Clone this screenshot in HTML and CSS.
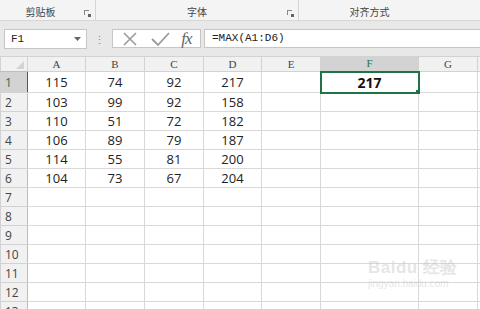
FILE: index.html
```html
<!DOCTYPE html>
<html>
<head>
    <meta name="viewport" content="width=device-width, initial-scale=1">
    <link rel="stylesheet" href="styles.css">
</head>

<body>
    <div class="ribbon">
        <div class="group group-clip">
            <span class="group-label">剪贴板</span>
            <span class="launcher"></span>
        </div>
        <div class="group group-font">
            <span class="group-label">字体</span>
            <span class="launcher"></span>
        </div>
        <div class="group group-align">
            <span class="group-label">对齐方式</span>
        </div>
    </div>

    <div class="formula-bar">
        <div class="name-box">
            <span>F1</span>
            <svg class="caret" width="7" height="4" viewBox="0 0 7 4"><path d="M0 0h7L3.5 4z" fill="#666"/></svg>
        </div>
        <div class="grip">⋮</div>
        <div class="fx-box">
            <svg width="18" height="18" viewBox="0 0 18 18"><path d="M3 3l12 12M15 3L3 15" stroke="#9a9a9a" stroke-width="1.6" fill="none"/></svg>
            <svg width="20" height="18" viewBox="0 0 20 18"><path d="M2 9l6 6L19 3" stroke="#9a9a9a" stroke-width="1.8" fill="none"/></svg>
            <span class="fx">fx</span>
        </div>
        <div class="formula-input">=MAX(A1:D6)</div>
    </div>

    <div class="sheet-wrap">
        <table class="sheet">
            <colgroup>
                <col class="c-row">
                <col class="c-a"><col class="c-b"><col class="c-c"><col class="c-d">
                <col class="c-e"><col class="c-f"><col class="c-g"><col class="c-h">
            </colgroup>
            <thead>
                <tr>
                    <th class="corner"><span class="corner-mark"></span></th>
                    <th>A</th><th>B</th><th>C</th><th>D</th><th>E</th>
                    <th class="active-col">F</th><th>G</th><th></th>
                </tr>
            </thead>
            <tbody>
                <tr><th class="active-row">1</th><td>115</td><td>74</td><td>92</td><td>217</td><td></td><td class="selected">217</td><td></td><td></td></tr>
                <tr><th>2</th><td>103</td><td>99</td><td>92</td><td>158</td><td></td><td></td><td></td><td></td></tr>
                <tr><th>3</th><td>110</td><td>51</td><td>72</td><td>182</td><td></td><td></td><td></td><td></td></tr>
                <tr><th>4</th><td>106</td><td>89</td><td>79</td><td>187</td><td></td><td></td><td></td><td></td></tr>
                <tr><th>5</th><td>114</td><td>55</td><td>81</td><td>200</td><td></td><td></td><td></td><td></td></tr>
                <tr><th>6</th><td>104</td><td>73</td><td>67</td><td>204</td><td></td><td></td><td></td><td></td></tr>
                <tr><th>7</th><td></td><td></td><td></td><td></td><td></td><td></td><td></td><td></td></tr>
                <tr><th>8</th><td></td><td></td><td></td><td></td><td></td><td></td><td></td><td></td></tr>
                <tr><th>9</th><td></td><td></td><td></td><td></td><td></td><td></td><td></td><td></td></tr>
                <tr><th>10</th><td></td><td></td><td></td><td></td><td></td><td></td><td></td><td></td></tr>
                <tr><th>11</th><td></td><td></td><td></td><td></td><td></td><td></td><td></td><td></td></tr>
                <tr><th>12</th><td></td><td></td><td></td><td></td><td></td><td></td><td></td><td></td></tr>
                <tr><th>13</th><td></td><td></td><td></td><td></td><td></td><td></td><td></td><td></td></tr>
            </tbody>
        </table>
    </div>

    <div class="watermark">
        <span class="wm-logo">Bai<span class="wm-du">du</span> 经验</span>
        <span class="wm-url">jingyan.baidu.com</span>
    </div>
</body>
</html>
```

FILE: styles.css
```css
* {
    box-sizing: border-box;
}

body {
    margin: 0;
    width: 480px;
    height: 309px;
    overflow: hidden;
    background: #fff;
    font-family: "Noto Sans CJK SC", "Noto Sans", sans-serif;
    color: #333;
    position: relative;
}

/* ribbon group labels */
.ribbon {
    display: flex;
    height: 21px;
    background: #f4f4f4;
    border-bottom: 1px solid #d6d6d6;
}

.group {
    position: relative;
    display: flex;
    align-items: center;
    justify-content: center;
    font-size: 10px;
    color: #444;
}

.group-clip {
    width: 96px;
    border-right: 1px solid #d6d6d6;
    padding-right: 14px;
}

.group-font {
    width: 203px;
    border-right: 1px solid #d6d6d6;
}

.group-align {
    flex: 1;
    padding-right: 40px;
}

.group-label {
    margin-top: 2px;
}

.launcher {
    position: absolute;
    right: 6px;
    bottom: 5px;
    width: 5px;
    height: 5px;
    border-top: 1px solid #888;
    border-left: 1px solid #888;
}

.launcher::after {
    content: "";
    position: absolute;
    right: -2px;
    bottom: -2px;
    width: 3px;
    height: 3px;
    background: #666;
}

/* formula bar */
.formula-bar {
    display: flex;
    align-items: center;
    height: 35px;
    background: #e8e8e8;
    padding: 0 0 0 4px;
}

.name-box {
    display: flex;
    align-items: center;
    justify-content: space-between;
    width: 83px;
    height: 20px;
    background: #fff;
    border: 1px solid #c6c6c6;
    padding: 0 5px 0 6px;
    font-family: "Liberation Mono", monospace;
    font-size: 11px;
    color: #222;
}

.grip {
    width: 25px;
    text-align: center;
    color: #888;
    font-size: 11px;
}

.fx-box {
    display: flex;
    align-items: center;
    justify-content: space-around;
    width: 89px;
    height: 19px;
    background: #fff;
    border: 1px solid #c6c6c6;
    padding: 0 3px;
}

.fx {
    font-family: "Liberation Serif", serif;
    font-style: italic;
    font-size: 17px;
    color: #666;
    letter-spacing: -1px;
    line-height: 1;
}

.formula-input {
    flex: 1;
    height: 19px;
    margin-left: 3px;
    background: #fff;
    border: 1px solid #c6c6c6;
    border-right: none;
    padding: 2px 0 0 7px;
    font-family: "Liberation Mono", monospace;
    font-size: 11px;
    color: #222;
}

/* grid */
.sheet-wrap {
    width: 480px;
    overflow: hidden;
}

.sheet {
    border-collapse: collapse;
    table-layout: fixed;
    width: 480px;
}

.c-row { width: 27px; }
.c-a { width: 58px; }
.c-b { width: 59px; }
.c-c { width: 59px; }
.c-d { width: 58px; }
.c-e { width: 59px; }
.c-f { width: 98px; }
.c-g { width: 59px; }
.c-h { width: 3px; }

.sheet th,
.sheet td {
    padding: 0;
    border: 1px solid #d9d9d9;
    height: 19px;
    text-align: center;
    overflow: hidden;
    white-space: nowrap;
}

.sheet thead th {
    height: 15px;
    background: #f1f1f1;
    border-color: #d2d2d2;
    font-family: "Liberation Serif", serif;
    font-weight: normal;
    font-size: 11px;
    color: #444;
    line-height: 1;
}

.sheet tbody th {
    background: #f1f1f1;
    border-color: #d2d2d2;
    border-right-color: #bdbdbd;
    font-family: "Open Sans", sans-serif;
    font-weight: normal;
    font-size: 12px;
    color: #444;
    text-align: left;
    padding-left: 4px;
}

.sheet td {
    font-family: "Open Sans", sans-serif;
    font-size: 13px;
    color: #222;
}

.sheet thead th.corner {
    position: relative;
    border-bottom-color: #bdbdbd;
}

.corner-mark {
    position: absolute;
    right: 3px;
    bottom: 2px;
    width: 0;
    height: 0;
    border-left: 8px solid transparent;
    border-bottom: 8px solid #d3d3d3;
}

.sheet thead th.active-col {
    background: #d3d3d3;
    color: #217346;
    border-bottom: 1px solid #217346;
}

.sheet tbody th.active-row {
    background: #d3d3d3;
    color: #217346;
    border-right: 1px solid #217346;
}

.sheet td.selected {
    position: relative;
    border: 2px solid #217346;
    font-weight: bold;
    font-size: 14px;
    color: #111;
}

.sheet td.selected::after {
    content: "";
    position: absolute;
    right: -4px;
    bottom: -4px;
    width: 5px;
    height: 5px;
    background: #217346;
    border: 1px solid #fff;
}

/* faint watermark over the grid */
.watermark {
    position: absolute;
    left: 368px;
    top: 256px;
    display: flex;
    flex-direction: column;
    align-items: flex-start;
    color: rgba(190, 190, 190, 0.4);
    font-family: "Liberation Sans", sans-serif;
    pointer-events: none;
}

.wm-logo {
    font-size: 17px;
    font-weight: bold;
    letter-spacing: 0.5px;
}

.wm-url {
    font-size: 10px;
    margin-top: -1px;
}
```
